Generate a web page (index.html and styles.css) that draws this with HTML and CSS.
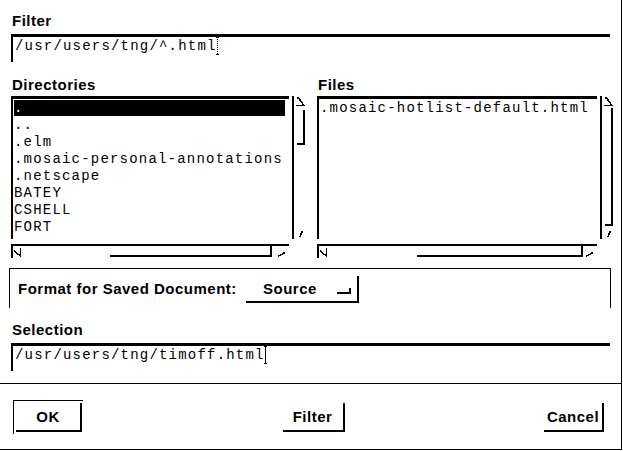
FILE: index.html
```html
<!DOCTYPE html>
<html>
<head>
<meta charset="utf-8">
<link rel="stylesheet" href="styles.css">
</head>
<body>
<div class="dialog">
  <div class="label filter-label">Filter</div>
  <div class="field">/usr/users/tng/^.html<span class="caret dotted"></span></div>

  <div class="col-labels">
    <div class="label col-label">Directories</div>
    <div class="label">Files</div>
  </div>

  <div class="lists">
    <div class="column">
      <div class="list">
        <div class="item sel">.</div>
        <div class="item">..</div>
        <div class="item">.elm</div>
        <div class="item">.mosaic-personal-annotations</div>
        <div class="item">.netscape</div>
        <div class="item">BATEY</div>
        <div class="item">CSHELL</div>
        <div class="item">FORT</div>
      </div>
      <div class="vscroll">
        <svg class="arrow" width="13" height="11" viewBox="0 0 13 11"><path d="M4 1 V3 M4 1 L9.5 9 M2 9.5 H10.5" fill="none" stroke="#000" stroke-width="1.5"/></svg>
        <div class="vtrough"><div class="vslider" style="margin-top:3px;height:35px"></div></div>
        <svg class="arrow" width="13" height="11" viewBox="0 0 13 11"><path d="M5.5 9.5 L8.5 3" fill="none" stroke="#000" stroke-width="1.5"/></svg>
      </div>
      <div class="hscroll">
        <svg class="arrow" width="10" height="12" viewBox="0 0 10 12"><path d="M1 5 L7.5 10 M7.5 10.5 V2" fill="none" stroke="#000" stroke-width="1.5"/></svg>
        <div class="htrough"><div class="hslider" style="margin-left:87px;width:162px"></div></div>
        <svg class="arrow" width="14" height="12" viewBox="0 0 14 12"><path d="M3 10.5 L10 6.5" fill="none" stroke="#000" stroke-width="1.5"/></svg>
      </div>
    </div>

    <div class="column">
      <div class="list">
        <div class="item">.mosaic-hotlist-default.html</div>
      </div>
      <div class="vscroll">
        <svg class="arrow" width="13" height="11" viewBox="0 0 13 11"><path d="M4 1 V3 M4 1 L9.5 9 M2 9.5 H10.5" fill="none" stroke="#000" stroke-width="1.5"/></svg>
        <div class="vtrough"><div class="vslider" style="margin-top:1px;height:118px"></div></div>
        <svg class="arrow" width="13" height="11" viewBox="0 0 13 11"><path d="M5.5 9.5 L8.5 3" fill="none" stroke="#000" stroke-width="1.5"/></svg>
      </div>
      <div class="hscroll">
        <svg class="arrow" width="10" height="12" viewBox="0 0 10 12"><path d="M1 5 L7.5 10 M7.5 10.5 V2" fill="none" stroke="#000" stroke-width="1.5"/></svg>
        <div class="htrough"><div class="hslider" style="margin-left:88px;width:166px"></div></div>
        <svg class="arrow" width="14" height="12" viewBox="0 0 14 12"><path d="M3 10.5 L10 6.5" fill="none" stroke="#000" stroke-width="1.5"/></svg>
      </div>
    </div>
  </div>

  <div class="format">
    <div class="label format-label">Format for Saved Document:</div>
    <div class="option">
      <span class="label">Source</span>
      <span class="indicator"></span>
    </div>
  </div>

  <div class="label sel-label">Selection</div>
  <div class="field">/usr/users/tng/timoff.html<span class="caret"></span></div>

  <div class="sep"></div>

  <div class="actions">
    <div class="default-frame"><div class="btn ok label">OK</div></div>
    <div class="btn filter-btn label">Filter</div>
    <div class="btn cancel label">Cancel</div>
  </div>
</div>
</body>
</html>
```

FILE: styles.css
```css
html, body {
  margin: 0;
  padding: 0;
  background: #fff;
}

.dialog {
  box-sizing: border-box;
  width: 622px;
  height: 450px;
  border-right: 1px solid #000;
  border-bottom: 1px solid #000;
  color: #000;
  font-family: "Liberation Sans", Arial, sans-serif;
  overflow: hidden;
}

.label {
  font-family: "Liberation Sans", Arial, sans-serif;
  font-weight: bold;
  font-size: 15px;
  line-height: 17px;
  letter-spacing: 0.5px;
  white-space: nowrap;
}

.filter-label {
  height: 17px;
  margin: 12px 0 0 12px;
}

.field {
  box-sizing: border-box;
  width: 599px;
  height: 28px;
  margin: 5px 0 0 11px;
  border-top: 3px solid #000;
  border-left: 2px solid #000;
  padding: 1px 0 0 2px;
  font-family: "Liberation Mono", "Courier New", monospace;
  font-size: 14px;
  letter-spacing: 1.2px;
  line-height: 17px;
  white-space: pre;
}

.caret {
  display: inline-block;
  position: relative;
  width: 1px;
  height: 18px;
  margin-top: -1px;
  vertical-align: top;
  background: #000;
}

.caret::before,
.caret::after {
  content: "";
  position: absolute;
  left: -1px;
  width: 3px;
  height: 1px;
  background: #000;
}

.caret::before { top: 0; }
.caret::after { bottom: 0; }

.caret.dotted {
  background: repeating-linear-gradient(#000 0 1px, transparent 1px 2px);
}

.col-labels {
  display: flex;
  height: 17px;
  margin-top: 14px;
  padding-left: 12px;
}

.col-label {
  width: 306px;
}

.lists {
  display: flex;
  gap: 10px;
  margin: 3px 0 0 11px;
}

.column {
  width: 296px;
  display: grid;
  grid-template-columns: 1fr 15px;
  grid-template-rows: 143px 14px;
  column-gap: 3px;
  row-gap: 5px;
}

.list {
  box-sizing: border-box;
  border-top: 3px solid #000;
  border-left: 2px solid #000;
  padding: 1px 0 0 1px;
  display: flex;
  flex-direction: column;
  gap: 1px;
  overflow: hidden;
  font-family: "Liberation Mono", "Courier New", monospace;
  font-size: 14px;
  letter-spacing: 1.2px;
  line-height: 16px;
}

.item {
  height: 16px;
  margin-right: 4px;
  white-space: pre;
}

.item.sel {
  background: #000;
  color: #fff;
}

.vscroll {
  box-sizing: border-box;
  border-left: 2px solid #000;
  display: flex;
  flex-direction: column;
}

.arrow {
  display: block;
  flex: none;
  shape-rendering: crispEdges;
}

.vtrough {
  flex: 1;
}

.vslider {
  box-sizing: border-box;
  width: 8px;
  margin-left: 3px;
  border-right: 2px solid #000;
  border-bottom: 2px solid #000;
}

.hscroll {
  box-sizing: border-box;
  border-top: 2px solid #000;
  border-left: 2px solid #000;
  display: flex;
}

.htrough {
  flex: 1;
}

.hslider {
  box-sizing: border-box;
  height: 11px;
  border-right: 2px solid #000;
  border-bottom: 2px solid #000;
}

.format {
  box-sizing: border-box;
  width: 602px;
  height: 40px;
  margin: 10px 0 0 9px;
  border: 1px solid #000;
  border-bottom: none;
  display: flex;
  align-items: flex-start;
}

.format-label {
  width: 228px;
  margin-top: 11px;
  padding-left: 8px;
}

.option {
  box-sizing: border-box;
  width: 113px;
  height: 27px;
  margin-top: 7px;
  padding: 4px 0 0 17px;
  border-right: 2px solid #000;
  border-bottom: 2px solid #000;
  display: flex;
  align-items: flex-start;
}

.indicator {
  box-sizing: border-box;
  width: 14px;
  height: 6px;
  margin: 8px 6px 0 auto;
  border-right: 2px solid #000;
  border-bottom: 2px solid #000;
}

.sel-label {
  height: 17px;
  margin: 13px 0 0 12px;
}

.sep {
  height: 1px;
  margin-top: 12px;
  background: #000;
}

.actions {
  display: flex;
  justify-content: space-between;
  align-items: flex-start;
  padding: 0 17px 0 13px;
}

.default-frame {
  margin-top: 16px;
  padding: 2px 1px 2px 2px;
  border-top: 1px solid #000;
  border-left: 1px solid #000;
}

.btn {
  box-sizing: border-box;
  height: 29px;
  border-right: 2px solid #000;
  border-bottom: 2px solid #000;
  display: flex;
  align-items: center;
  justify-content: center;
}

.ok { width: 66px; }

.filter-btn {
  width: 62px;
  margin-top: 19px;
}

.cancel {
  width: 60px;
  margin-top: 19px;
}
```
